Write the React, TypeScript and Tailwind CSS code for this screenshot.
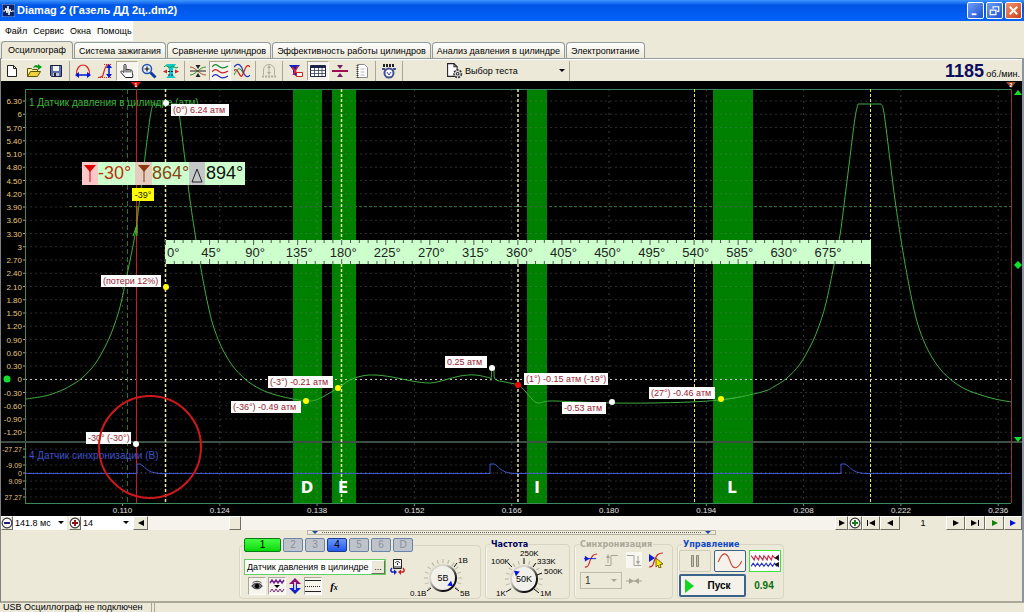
import type { ReactNode } from 'react';

const tabs = [
  'Осциллограф',
  'Система зажигания',
  'Сравнение цилиндров',
  'Эффективность работы цилиндров',
  'Анализ давления в цилиндре',
  'Электропитание',
];

const menu = ['Файл', 'Сервис', 'Окна', 'Помощь'];

type Point = [number, number];

/* ---------- small shared pieces ---------- */

const Icon = ({ children, className = 'size-4' }: { children: ReactNode; className?: string }) => (
  <svg viewBox="0 0 16 16" className={className} fill="none" aria-hidden="true">
    {children}
  </svg>
);

const Caret = ({ color = '#000' }: { color?: string }) => (
  <svg viewBox="0 0 6 4" className="pointer-events-none h-1 w-1.5 shrink-0" aria-hidden="true">
    <path d="M0 0h6L3 3z" fill={color} />
  </svg>
);

const Separator = () => <div className="mx-0.5 h-5 w-px shrink-0 bg-[#aca899]" />;

type ToolProps = { label: string; pressed?: boolean; disabled?: boolean; children: ReactNode };

const Tool = ({ label, pressed, disabled, children }: ToolProps) => (
  <button
    aria-label={label}
    disabled={disabled}
    className={
      pressed
        ? 'flex h-5 w-[22px] shrink-0 items-center justify-center border border-[#aca899] border-r-white border-b-white bg-[#f6f4ec]'
        : 'flex h-5 w-[22px] shrink-0 items-center justify-center'
    }
  >
    <Icon>{children}</Icon>
  </button>
);

/* ---------- title, menu, tabs ---------- */

const TitleBar = () => (
  <header className="flex h-[21px] shrink-0 items-center bg-linear-to-b from-[#3d95ff] from-0% via-[#0055e5] via-25% to-[#0162fb] px-0.5">
    <svg viewBox="0 0 13 13" className="mr-0.5 size-[13px]" aria-hidden="true">
      <rect width="13" height="13" fill="#0a246a" stroke="#8fb4f0" />
      <path d="M1 7h2l1-3 1 5 1-7 1 9 1-6 1 3 1-1h2" fill="none" stroke="#fff" />
    </svg>
    <h1 className="text-[11px] leading-none font-bold text-white">Diamag 2 (Газель ДД 2ц..dm2)</h1>
    <div className="ml-auto flex gap-0.5">
      <button aria-label="Свернуть" className="size-[17px] rounded-xs border border-white bg-linear-to-br from-[#6f9df5] to-[#1c4fd0]">
        <Icon className="size-[15px]">
          <path d="M4 12h5" stroke="#fff" strokeWidth="2" />
        </Icon>
      </button>
      <button aria-label="Восстановить" className="size-[17px] rounded-xs border border-white bg-linear-to-br from-[#6f9df5] to-[#1c4fd0]">
        <Icon className="size-[15px]">
          <path d="M6.500 6V4h6v5h-2" stroke="#fff" strokeWidth="1.300" />
          <path d="M3.500 7.500h6v5h-6z" stroke="#fff" strokeWidth="1.300" />
        </Icon>
      </button>
      <button aria-label="Закрыть" className="size-[17px] rounded-xs border border-white bg-linear-to-br from-[#f0906c] to-[#cf3c12]">
        <Icon className="size-[15px]">
          <path d="m4 4 8 8M12 4l-8 8" stroke="#fff" strokeWidth="2" />
        </Icon>
      </button>
    </div>
  </header>
);

const MenuBar = () => (
  <nav className="flex h-5 shrink-0">
    <ul className="flex w-[133px] items-center gap-1.5 bg-white pl-[5px]">
      {menu.map((item) => (
        <li key={item}>
          <button className="block">{item}</button>
        </li>
      ))}
    </ul>
  </nav>
);

const Tabs = () => (
  <div role="tablist" className="flex h-[18px] shrink-0 items-end gap-px border-b border-[#919b9c] pl-px">
    {tabs.map((tab, i) => (
      <button
        key={tab}
        role="tab"
        aria-selected={i === 0}
        className={
          i === 0
            ? '-mb-px h-[18px] rounded-t-sm border border-b-0 border-[#919b9c] bg-[#ece9d8] px-1.5 pb-px'
            : 'h-4 rounded-t-sm border border-b-0 border-[#919b9c] bg-linear-to-b from-white to-[#ece9d8] px-1'
        }
      >
        {tab}
      </button>
    ))}
  </div>
);

/* ---------- toolbar ---------- */

const Toolbar = () => (
  <div className="flex h-[22px] shrink-0 items-center border-t border-white">
    <Tool label="Новый">
      <path d="M3.500 2.500h6l3 3v8h-9z" fill="#fff" stroke="#222" />
      <path d="M9.500 2.500v3h3" stroke="#222" />
    </Tool>
    <Tool label="Открыть">
      <path d="M1.500 13.500v-8h4l1 1h5v2" fill="#fff3a0" stroke="#5c5200" />
      <path d="m1.500 13.500 3-5h10l-3 5z" fill="#f2cf3c" stroke="#5c5200" />
      <path d="M7 5c1-3 4-4 5-2V1l4 3-4 3V5c-2-1-3-1-5 0z" fill="#0a9a1a" />
    </Tool>
    <Tool label="Сохранить">
      <path d="M2.500 2.500h11v11h-10l-1-1z" fill="#5b6fa8" stroke="#1a1f4a" />
      <path d="M5 3h6v5H5z" fill="#f2f2f2" />
      <path d="M5 10h6v3H5z" fill="#c8c8c8" />
      <path d="M6 10h2v3H6z" fill="#1a1f4a" />
    </Tool>
    <Separator />
    <Tool label="Длительность">
      <path d="M1.500 11C1.500-1 14.500-1 14.500 11" stroke="#e02020" strokeWidth="1.200" />
      <path d="M3 12h10" stroke="#0018d8" strokeWidth="1.500" />
      <path d="m0 12 4-3v6zM16 12l-4-3v6z" fill="#0018d8" />
    </Tool>
    <Tool label="Амплитуда">
      <path d="M1 14.500c5 0 5-2 6-6s2-7 5-7" stroke="#e02020" strokeWidth="1.200" />
      <path d="M7 1.500h8M1 14.500h14" stroke="#e02020" strokeDasharray="1 1" />
      <path d="M12 4v8" stroke="#0018d8" strokeWidth="1.500" />
      <path d="m12 1 3 4H9zM12 15l3-4H9z" fill="#0018d8" />
    </Tool>
    <Tool label="Рука" pressed>
      <path
        d="M6.500 14.500 2 9.500c-.8-1 .6-2 1.500-1.200L5 9.500v-7c0-1.500 2-1.500 2 0V7c0-1 2-1 2 0 .2-.9 2-.7 2 .4.300-.8 2-.5 2 .5 0 2 1.500 3.500.500 6.600z"
        fill="#fff"
        stroke="#222"
      />
      <path d="M7 7v2.500M9 7v2.500M11 7.500v2" stroke="#222" />
    </Tool>
    <Tool label="Масштаб">
      <path d="m9.500 9.500 5 5" stroke="#123c9c" strokeWidth="3" />
      <circle cx="6" cy="6" r="4.500" fill="#eaf4ff" stroke="#2050b0" strokeWidth="1.500" />
      <path d="M6 3.500v5M3.500 6h5" stroke="#111" strokeWidth="1.200" />
    </Tool>
    <Tool label="Линейка">
      <path d="M3 1h10l-3 5v6l3 3H3l3-3V6z" fill="#10c8d0" />
      <path d="M1 4c3-4 5 3 7 0s4 3 7 0" stroke="#148a28" />
      <path d="M5 8.500h6M5 12h6" stroke="#222" strokeDasharray="2 1" />
      <path d="m0 8.500 4-2v4zM16 8.500l-4-2v4z" fill="#d02020" />
    </Tool>
    <Separator />
    <Tool label="Совместить">
      <path d="M0 4c6 0 9 8 16 8" stroke="#a05030" />
      <path d="M0 12C6 12 9 4 16 4" stroke="#2a8a2a" />
      <path d="M0 8h16" stroke="#222" />
      <path d="m8 6 2.500-4h-5zM8 10l2.500 4h-5z" fill="#222" />
    </Tool>
    <Tool label="Разнести" pressed>
      <path d="M0 4c3-4 5-2 8 0s5 1 8-1" stroke="#148a28" strokeWidth="1.200" />
      <path d="M0 9c3-4 5-2 8 0s5 1 8-1" stroke="#d02020" strokeWidth="1.200" />
      <path d="M0 14c3-4 5-2 8 0s5 1 8-1" stroke="#2030c0" strokeWidth="1.200" />
    </Tool>
    <Tool label="Наложить">
      <path d="M0 4c5-6 8 0 9 4s4 8 7 4" stroke="#2030c0" strokeWidth="1.200" />
      <path d="M0 8c3-6 6 8 8 5s4-14 8-9" stroke="#d02020" strokeWidth="1.200" />
      <path d="M0 12c4-8 6-8 9-2" stroke="#148a28" />
    </Tool>
    <Separator />
    <Tool label="Авто" disabled>
      <path d="M2.500 12V7a5.500 5.500 0 0 1 11 0v5M8 4v6" stroke="#b0ad9f" />
      <path d="m8 2 2 3H6zM8 12l2-3H6z" fill="#b0ad9f" />
      <path d="M1 13.500h14" stroke="#b0ad9f" strokeWidth="2" strokeDasharray="2 1" />
    </Tool>
    <Separator />
    <Tool label="Фильтр">
      <path d="M1 2h11L8 7v6l-3-2V7z" fill="#1020c0" />
      <path d="m4 4 6 8M10 3 5 12" stroke="#e02040" strokeWidth="1.500" />
      <path d="M8.500 9.500h6v4h-6z" fill="#fff" stroke="#d02020" />
    </Tool>
    <Tool label="Таблица" pressed>
      <path d="M.5 2.500h15v11H.5z" fill="#fff" stroke="#20264a" />
      <path d="M1 4h14" stroke="#20264a" strokeWidth="2" />
      <path d="M4.500 3v10M8.500 3v10M12 3v10M1 7.500h14M1 10.500h14" stroke="#20264a" strokeOpacity="0.7" />
    </Tool>
    <Tool label="Граница">
      <path d="M0 8h16" stroke="#a01050" strokeWidth="2" />
      <path d="m8 6 3-4H5zM8 10l3 4H5z" fill="#702060" />
    </Tool>
    <Tool label="Отчёт">
      <path d="M3.500 1.500h7l3 3v10h-10z" fill="#fff" stroke="#8a8a8a" />
      <path d="M3.500 2v13" stroke="#444" strokeWidth="2" strokeDasharray="1 1" />
      <path d="M6.500 6h4M6.500 9h4M6.500 12h4" stroke="#b8b8b8" />
    </Tool>
    <Separator />
    <Tool label="Автонастройка">
      <path d="M2 2.500h12" stroke="#222" strokeWidth="3" strokeDasharray="2 1" />
      <circle cx="8" cy="10" r="4.500" fill="#fff" stroke="#405090" strokeWidth="2" />
      <path d="m6 9 2 3 2-3" stroke="#3040b0" />
      <path d="M1 6h3M12 6h3" stroke="#405090" strokeWidth="2" />
    </Tool>
    <Separator />
    <label className="ml-[41px] flex w-[121px] items-center pr-0.5">
      <Icon className="mr-0.5 size-[17px] shrink-0">
        <path d="M1.500 1.500h6l3 3v9h-9z" fill="#fff" stroke="#222" />
        <path d="M7.500 1.500v3h3" stroke="#222" />
        <circle cx="11" cy="11" r="3.500" fill="#d8d8d8" stroke="#333" strokeDasharray="2 1" strokeWidth="1.500" />
        <circle cx="11" cy="11" r="1.200" fill="#fff" stroke="#333" />
      </Icon>
      <select aria-label="Выбор теста" className="min-w-0 flex-1 appearance-none outline-none">
        <option>Выбор теста</option>
      </select>
      <Caret />
    </label>
    <Separator />
    <div className="ml-auto flex items-baseline gap-0.5 pr-0.5">
      <output className="text-lg leading-none font-bold text-[#0a0a60]">1185</output>
      <span>об./мин.</span>
    </div>
  </div>
);

/* ---------- oscilloscope chart ---------- */

const PLOT = { left: 25, right: 1011, top: 89, bottom: 503 };
const PERIOD = 705;

// Catmull-Rom spline written out as cubic segments
const spline = (pts: Point[]) =>
  pts.reduce((d, p, i) => {
    if (i === 0) return `M${p[0]} ${p[1]}`;
    const a = pts[i - 2] ?? pts[i - 1];
    const b = pts[i - 1];
    const c = pts[i + 1] ?? p;
    return `${d}C${b[0] + (p[0] - a[0]) / 6} ${b[1] + (p[1] - a[1]) / 6} ${p[0] - (c[0] - b[0]) / 6} ${p[1] - (c[1] - b[1]) / 6} ${p[0]} ${p[1]}`;
  }, '');

const rise: Point[] = [
  [26, 399], [45, 396], [60, 391], [70, 386], [82, 378], [95, 364], [107, 343], [115, 323],
  [121, 303], [128, 270], [135, 235], [139, 205], [144, 165], [150, 118], [153, 104],
];
const fall: Point[] = [
  [176, 104], [179, 113], [185, 160], [190, 200], [197, 246], [203, 280], [208, 305], [213, 325],
  [221, 346], [232, 365], [245, 379], [260, 389], [276, 395], [293, 399],
];
const middle: Point[] = [
  [293, 399], [306, 401], [316, 400], [326, 395], [338, 388], [350, 380], [362, 376], [375, 375],
  [392, 377], [412, 381], [430, 383], [445, 380], [460, 376], [475, 375], [490, 378], [491, 380],
  [492, 368], [494, 368], [495, 379], [505, 382], [518, 385], [525, 391], [532, 399], [538, 403],
  [550, 401], [580, 402], [612, 403], [650, 403], [690, 402], [720, 400], [740, 397],
];
const shift = (pts: Point[]): Point[] => pts.map(([x, y]) => [x + PERIOD, y]);
const rise2: Point[] = [...middle.slice(-2), ...shift(rise).slice(2)];
const fall2: Point[] = [...shift(fall).slice(0, -1), [995, 399], [1011, 402]];

const bands = [
  { x: 293, w: 29, name: 'D', nx: 307 },
  { x: 332, w: 24, name: 'E', nx: 343 },
  { x: 527, w: 20, name: 'I', nx: 537 },
  { x: 713, w: 40, name: 'L', nx: 732 },
];

const notes = [
  { x: 171, y: 104, w: 58, text: '(0°) 6.24 атм' },
  { x: 101, y: 275, w: 60, text: '(потери 12%)' },
  { x: 268, y: 376, w: 65, text: '(-3°) -0.21 атм' },
  { x: 231, y: 401, w: 70, text: '(-36°) -0.49 атм' },
  { x: 445, y: 356, w: 42, text: '0.25 атм' },
  { x: 524, y: 373, w: 84, text: '(1°) -0.15 атм (-19°)' },
  { x: 562, y: 402, w: 44, text: '-0.53 атм' },
  { x: 649, y: 387, w: 66, text: '(27°) -0.46 атм' },
  { x: 86, y: 432, w: 45, text: '-30° (-30°)' },
];

const dots = [
  { x: 166, y: 103, fill: '#fff' },
  { x: 166, y: 287, fill: '#ffff00' },
  { x: 306, y: 401, fill: '#ffff00' },
  { x: 338, y: 388, fill: '#ffff00' },
  { x: 492, y: 368, fill: '#fff' },
  { x: 518, y: 385, fill: '#ff0000' },
  { x: 612, y: 402, fill: '#fff' },
  { x: 721, y: 399, fill: '#ffff00' },
  { x: 136, y: 444, fill: '#fff' },
];

const syncLevels = [
  { y: 449, text: '-27.27' },
  { y: 457, text: '' },
  { y: 465, text: '-9.09' },
  { y: 473, text: '0' },
  { y: 481, text: '9.09' },
  { y: 489, text: '' },
  { y: 497, text: '27.27' },
];

const pressureLevels = Array.from({ length: 26 }, (_, i) => {
  const value = (63 - i * 3) / 10;
  return { y: 101 + i * 13.25, text: Number.isInteger(value) ? String(value) : value.toFixed(2) };
});

const times = Array.from({ length: 10 }, (_, i) => ({
  x: 122.5 + i * 97.3,
  text: (0.11 + i * 0.014).toFixed(3),
}));

const phases = [165.5, 341.5, 518, 694.5, 870.5];

const Ruler = () => (
  <g fontSize="13" fill="#222">
    <rect x="165" y="240" width="706" height="24" fill="#ccffcc" />
    {Array.from({ length: 80 }, (_, i) => {
      const x = 165.5 + i * 8.81;
      const len = i % 5 === 0 ? 5 : 3;
      return <path key={i} d={`M${x} 240v${len}M${x} 264v-${len}`} stroke="#555" />;
    })}
    {Array.from({ length: 16 }, (_, i) => (
      <text key={i} x={i === 0 ? 167 : 167 + i * 44.06} y="257" textAnchor={i === 0 ? 'start' : 'middle'}>
        {i * 45}°
      </text>
    ))}
  </g>
);

const Readout = () => (
  <g fontSize="18">
    <rect x="82" y="162" width="163" height="23" fill="#ccffcc" />
    <rect x="82" y="162" width="16" height="23" fill="#ffc8c8" />
    <rect x="135" y="162" width="17" height="23" fill="#e4cdc0" />
    <text x="98" y="179" fill="#c03010">-30°</text>
    <text x="152" y="179" fill="#8b4513">864°</text>
    <rect x="189" y="162" width="16" height="23" fill="#c4c8c8" />
    <path d="M84 165h12l-6 7z" fill="#e00000" />
    <path d="M90 170v12" stroke="#e00000" />
    <path d="M138 165h12l-6 7z" fill="#8b3a10" />
    <path d="M144 170v12" stroke="#8b3a10" />
    <path d="m197 169-5 13h10z" fill="none" stroke="#222" />
    <text x="206" y="179" fill="#111">894°</text>
    <rect x="132" y="188" width="22" height="13" fill="#ffff00" />
    <text x="143" y="198" fontSize="9" textAnchor="middle" fill="#222">
      -39°
    </text>
  </g>
);

const Chart = () => (
  <svg
    viewBox="1 81 1021 435"
    role="img"
    aria-label="Осциллограмма давления в цилиндре"
    className="block h-auto w-full shrink-0 bg-black font-['Liberation_Sans',sans-serif]"
  >
    {/* phase bands */}
    {bands.map((b) => (
      <rect key={b.name} x={b.x} y={PLOT.top} width={b.w} height={PLOT.bottom - PLOT.top} fill="#008000" />
    ))}

    {/* grid */}
    {[...pressureLevels, ...syncLevels].map((l) => (
      <g key={l.y}>
        <path d={`M${PLOT.left} ${l.y}H${PLOT.right}`} stroke="#808080" strokeOpacity="0.35" strokeDasharray="2 3" />
        <path d={`M23 ${l.y}h2`} stroke="#a0a0a0" />
      </g>
    ))}
    <g textAnchor="end" fill="#e8c878">
      {pressureLevels.map((l) => (
        <text key={l.y} x="22" y={l.y + 3} fontSize="8">
          {l.text}
        </text>
      ))}
      {syncLevels.map((l) => (
        <text key={l.y} x="22" y={l.y + 3} fontSize="7">
          {l.text}
        </text>
      ))}
    </g>
    {times.map((t) => (
      <g key={t.text}>
        <path d={`M${t.x} ${PLOT.top}V${PLOT.bottom}`} stroke="#808080" strokeOpacity="0.45" strokeDasharray="2 4" />
        <path d={`M${t.x} ${PLOT.bottom}v3`} stroke="#60a080" />
        <text x={t.x} y="513" fontSize="8" textAnchor="middle" fill="#e0e0e0">
          {t.text}
        </text>
      </g>
    ))}
    <path d="M25 379.500H1011" stroke="#c8c8c8" strokeDasharray="2 3" />
    <path d="M69 206.500H1011" stroke="#2e6a34" strokeDasharray="3 2" />
    <path d="M127.500 89V503" stroke="#1f7a28" strokeDasharray="5 3" />

    {/* frame */}
    <path d="M25.500 503V89.500H1011" fill="none" stroke="#3c8a5c" />
    <path d="M25 503.500H1011" stroke="#3c8a5c" />
    <path d="M1 442H1022" stroke="#3e5046" strokeWidth="2" />

    {/* sensor titles */}
    <text x="29" y="106" fontSize="10" fill="#38b838">
      1 Датчик давления в цилиндре (атм)
    </text>
    <text x="29" y="459" fontSize="10" fill="#3c50c8">
      4 Датчик синхронизации (В)
    </text>

    {/* cursor 1 and phase marks */}
    {phases.map((x, i) => (
      <path
        key={x}
        d={`M${x} 89V503`}
        stroke={i < 3 ? '#e8e8a8' : '#e8e860'}
        strokeWidth={i < 3 ? 1.5 : 1}
        strokeDasharray="3 2"
      />
    ))}
    <path d="M136.500 89V503" stroke="#c02020" />
    <path d="M1011.500 89V503" stroke="#8a3a20" />
    <path d="M131 82h10l-5 6z" fill="#e01010" />
    <path d="M1006 82h10l-5 6z" fill="#a04a20" />
    <text x="136" y="87" fontSize="5" fontWeight="bold" textAnchor="middle" fill="#fff">
      1
    </text>
    <text x="1011" y="87" fontSize="5" fontWeight="bold" textAnchor="middle" fill="#fff">
      2
    </text>

    {/* pressure trace */}
    <g fill="none" stroke="#3fae3f">
      <path d={spline(rise)} />
      <path d="M153 104H176" strokeDasharray="6 3" />
      <path d={spline(fall)} />
      <path d={spline(middle)} />
      <path d={spline(rise2)} />
      <path d="M858 104H881" />
      <path d={spline(fall2)} />
    </g>
    <path d="m133 236 4-11v11" fill="none" stroke="#20e020" />
    <path d="M137 233v-27" stroke="#b08020" />

    {/* sync trace */}
    <path
      d="M25 473.500H137V464h3c4 1 6 9 20 9.500H490V464h4c4 1 6 9 20 9.500H841V464h4c4 1 6 9 20 9.500H1011"
      fill="none"
      stroke="#3c54d0"
    />
    <path d="M25 473H1011" stroke="#b8c0e0" strokeOpacity="0.3" strokeDasharray="1 3" />

    <g fontFamily="DejaVu Sans, sans-serif" fontSize="15" fontWeight="bold" textAnchor="middle" fill="#fff">
      {bands.map((b) => (
        <text key={b.name} x={b.nx} y="493">
          {b.name}
        </text>
      ))}
    </g>

    <Readout />
    <Ruler />

    {notes.map((n) => (
      <g key={n.text}>
        <rect x={n.x} y={n.y} width={n.w} height="12" fill="#fff" />
        <text x={n.x + 2} y={n.y + 9} fontSize="9" fill="#a01830">
          {n.text}
        </text>
      </g>
    ))}
    <circle cx="150" cy="447" r="51" fill="none" stroke="#d01818" strokeWidth="2" />
    {dots.map((d) => (
      <circle key={`${d.x}-${d.y}`} cx={d.x} cy={d.y} r="3" fill={d.fill} />
    ))}

    {/* level handles */}
    <circle cx="7" cy="379" r="3.500" fill="#10e030" />
    <path d="m1018 90 4 5h-8zM1018 261l4 4-4 4-4-4zM1018 442l4-5h-8z" fill="#10e030" />
  </svg>
);

/* ---------- navigation strip ---------- */

const navButton =
  'flex h-[14px] shrink-0 items-center justify-center border border-white border-r-[#716f64] border-b-[#716f64] bg-[#ece9d8]';

const RoundSign = ({ color, plus }: { color: string; plus?: boolean }) => (
  <Icon className="size-3 shrink-0">
    <circle cx="8" cy="8" r="6.500" fill="#fff" stroke="#333" strokeWidth="1.500" />
    <path d={plus ? 'M4 8h8M8 4v8' : 'M4 8h8'} stroke={color} strokeWidth="2.500" />
  </Icon>
);

const Arrow = ({ d, color = '#000' }: { d: string; color?: string }) => (
  <svg viewBox="0 0 10 8" className="h-2 w-2.5" aria-hidden="true">
    <path d={d} fill={color} />
  </svg>
);

const LEFT = 'M8 1v6L2 4z';
const RIGHT = 'M2 1v6l6-3z';

const NavStrip = () => (
  <div className="flex h-[14px] shrink-0 items-center">
    <button aria-label="Сжать" className={`${navButton} w-3`}>
      <RoundSign color="#101080" />
    </button>
    <label className="flex h-full w-[54px] items-center bg-white pr-[3px]">
      <select aria-label="Развёртка" className="min-w-0 flex-1 appearance-none pl-0.5 outline-none">
        <option>141.8 мс</option>
      </select>
      <Caret />
    </label>
    <button aria-label="Растянуть" className={`${navButton} ml-0.5 w-3`}>
      <RoundSign color="#901010" plus />
    </button>
    <label className="flex h-full w-[52px] items-center bg-white pr-1">
      <select aria-label="Масштаб" className="min-w-0 flex-1 appearance-none pl-0.5 outline-none">
        <option>14</option>
      </select>
      <Caret />
    </label>
    <button aria-label="Влево" className={`${navButton} w-[15px]`}>
      <Arrow d={LEFT} />
    </button>
    <input
      type="range"
      aria-label="Прокрутка"
      defaultValue={12}
      className="h-[14px] min-w-0 flex-1 appearance-none bg-[#f5f3ec] [&::-webkit-slider-thumb]:h-[14px] [&::-webkit-slider-thumb]:w-3 [&::-webkit-slider-thumb]:appearance-none [&::-webkit-slider-thumb]:border [&::-webkit-slider-thumb]:border-white [&::-webkit-slider-thumb]:border-r-[#716f64] [&::-webkit-slider-thumb]:border-b-[#716f64] [&::-webkit-slider-thumb]:bg-[#ece9d8]"
    />
    <button aria-label="Вправо" className={`${navButton} w-[13px]`}>
      <Arrow d={RIGHT} />
    </button>
    <button aria-label="Добавить" className={`${navButton} w-[14px]`}>
      <RoundSign color="#108010" plus />
    </button>
    <button aria-label="В начало" className={`${navButton} w-[18px]`}>
      <Arrow d="M1 1h1v6H1zM9 1v6L3 4z" />
    </button>
    <button aria-label="Предыдущий кадр" className={`${navButton} w-5`}>
      <Arrow d={LEFT} />
    </button>
    <output className="w-[46px] text-center">1</output>
    <button aria-label="Следующий кадр" className={`${navButton} w-[19px]`}>
      <Arrow d={RIGHT} />
    </button>
    <button aria-label="В конец" className={`${navButton} w-5`}>
      <Arrow d="M1 1v6l6-3zM8 1h1v6H8z" />
    </button>
    <button aria-label="Воспроизвести" className={`${navButton} w-[19px]`}>
      <Arrow d="M2 1v6l6-3z" color="#108010" />
    </button>
    <button aria-label="Воспроизвести всё" className={`${navButton} w-[18px]`}>
      <Arrow d="M2 1v6l6-3z" color="#0010e0" />
    </button>
  </div>
);

/* ---------- control panel ---------- */

const group = 'h-[61px] min-w-0 rounded-sm border border-[#d8d4c0] shadow-[inset_1px_0_#f8f6ee]';
const caption = "ml-1 px-px font-['DejaVu_Sans_Condensed','DejaVu_Sans',sans-serif] leading-3 font-bold";

type Mark = { x1: number; y1: number; x2: number; y2: number; tx: number; ty: number; text: string };

type KnobProps = { value: string; angle: number; marks: Mark[]; cx: number; className: string; viewBox: string };

const Knob = ({ value, angle, marks, cx, className, viewBox }: KnobProps) => (
  <svg viewBox={viewBox} className={className} role="img" aria-label={value} fill="#000">
    <defs>
      <linearGradient id={`knob-${value}`} x1="0" y1="0" x2="1" y2="1">
        <stop offset="0.3" stopColor="#d8d6cc" />
        <stop offset="0.75" stopColor="#111" />
      </linearGradient>
    </defs>
    {Array.from({ length: 15 }, (_, i) => (
      <path key={i} d={`M${cx} 11v4`} stroke="#b8b4a4" transform={`rotate(${-126 + i * 18} ${cx} 30)`} />
    ))}
    <circle cx={cx} cy="30" r="13" fill="#f2f0ea" stroke={`url(#knob-${value})`} strokeWidth="2" />
    <path d={`M${cx} 17l3 5h-6z`} fill="#0018d8" transform={`rotate(${angle} ${cx} 30)`} />
    <text x={cx} y="33" fontSize="9" textAnchor="middle">
      {value}
    </text>
    {marks.map((m) => (
      <g key={m.text}>
        <path d={`M${m.x1} ${m.y1}L${m.x2} ${m.y2}`} stroke="#111" />
        <text x={m.tx} y={m.ty} fontSize="8">
          {m.text}
        </text>
      </g>
    ))}
  </svg>
);

const rangeMarks: Mark[] = [
  { x1: 46, y1: 19, x2: 49, y2: 15, tx: 50, ty: 15, text: '1В' },
  { x1: 23, y1: 40, x2: 19, y2: 43, tx: 2, ty: 48, text: '0.1В' },
  { x1: 47, y1: 40, x2: 51, y2: 43, tx: 52, ty: 48, text: '5В' },
];

const rateMarks: Mark[] = [
  { x1: 38, y1: 9, x2: 38, y2: 15, tx: 34, ty: 7, text: '250K' },
  { x1: 22, y1: 14, x2: 26, y2: 18, tx: 5, ty: 15, text: '100K' },
  { x1: 47, y1: 18, x2: 50, y2: 14, tx: 51, ty: 15, text: '333K' },
  { x1: 51, y1: 26, x2: 56, y2: 24, tx: 58, ty: 25, text: '500K' },
  { x1: 25, y1: 40, x2: 20, y2: 43, tx: 10, ty: 47, text: '1K' },
  { x1: 48, y1: 40, x2: 53, y2: 44, tx: 54, ty: 47, text: '1M' },
];

const channels = [
  { name: '1', style: 'w-[37px] border-[#0a7a14] bg-linear-to-b from-[#40ff40] to-[#00d800] text-black' },
  { name: '2', style: 'w-5 border-[#6a84a8] bg-[#bfc4cc] text-[#8a8f98]' },
  { name: '3', style: 'w-5 border-[#6a84a8] bg-[#bfc4cc] text-[#8a8f98]' },
  { name: '4', style: 'w-5 border-[#1c3890] bg-linear-to-b from-[#6a96ff] to-[#2458e8] text-black' },
  { name: '5', style: 'w-5 border-[#6a84a8] bg-[#bfc4cc] text-[#8a8f98]' },
  { name: '6', style: 'w-5 border-[#6a84a8] bg-[#bfc4cc] text-[#8a8f98]' },
  { name: 'D', style: 'w-5 border-[#6a84a8] bg-[#bfc4cc] text-[#8a8f98]' },
];

const pressedCell =
  'flex size-[18px] items-center justify-center border border-[#aca899] border-r-white border-b-white bg-[#f6f4ec]';

const ChannelGroup = () => (
  <fieldset className={`${group} w-[242px] pl-1`}>
    <legend className="flex gap-0.5">
      {channels.map((c) => (
        <button key={c.name} className={`h-[14px] rounded-xs border text-[10px] leading-none ${c.style}`}>
          {c.name}
        </button>
      ))}
    </legend>
    <div className="flex">
      <div className="w-40 pt-[7px]">
        <div className="flex items-center gap-1">
          <div className="flex h-4 w-[142px] items-center border border-[#60d060] bg-white">
            <input
              aria-label="Датчик"
              defaultValue="Датчик давления в цилиндре"
              className="h-full min-w-0 flex-1 pl-0.5 outline-none"
            />
            <button aria-label="Выбрать датчик" className={`${navButton} w-[14px]`}>
              ...
            </button>
          </div>
          <button aria-label="Сменить датчик" className="-mr-4">
            <Icon>
              <path d="M3.500.5h8v9h-8z" fill="#fff" stroke="#222" />
              <path d="M5 4c2-2 3-2 5 0M7.500 6V4M4 8h7" stroke="#222" />
              <path d="M5 13H2c-2-1-1-3 0-4" stroke="#1020c0" strokeWidth="1.500" />
              <path d="M10 13h3c2-1 1-3 0-4" stroke="#d02020" strokeWidth="1.500" />
              <path d="m4 10.500 3 2.500-3 3z" fill="#1020c0" />
              <path d="m11 10.500-3 2.500 3 3z" fill="#d02020" />
            </Icon>
          </button>
        </div>
        <div className="mt-0.5 flex items-center gap-0.5 pl-1">
          <button aria-label="Показать" className={pressedCell}>
            <Icon className="size-3">
              <path d="M1 8c3-5 11-5 14 0-3 5-11 5-14 0z" fill="#777" stroke="#111" />
              <circle cx="8" cy="8" r="3" fill="#000" />
              <path d="M2 4c3-3 9-3 12 0" stroke="#111" />
            </Icon>
          </button>
          <button aria-label="Инверсия" className={pressedCell}>
            <Icon>
              <path d="M1 5l2-3 2 3 2-3 2 3 2-3 2 3 2-3" stroke="#702090" strokeWidth="1.500" />
              <path d="m8 10 3-3H5z" fill="#000" />
              <path d="M1 14l2-3 2 3 2-3 2 3 2-3 2 3 2-3" stroke="#802080" />
            </Icon>
          </button>
          <button aria-label="Сдвиг" className="flex size-[14px] items-center justify-center">
            <Icon className="size-4 shrink-0">
              <path d="m8 0 6 6h-4v2H6V6H2z" fill="#8a1070" />
              <path d="m8 16 6-6h-4V7H6v3H2z" fill="#1020d0" />
              <path d="M8 4v8" stroke="#fff" strokeWidth="1.500" />
            </Icon>
          </button>
          <button aria-label="Уровни" className={pressedCell}>
            <Icon>
              <path d="M0 2.500h16M0 13.500h16" stroke="#222" />
              <path d="M0 8.500h16" stroke="#222" strokeDasharray="1 1" />
            </Icon>
          </button>
          <button aria-label="Формула" className="w-5 font-['Liberation_Serif',serif] text-[11px] leading-none font-bold italic">
            f<span className="text-[8px]">x</span>
          </button>
        </div>
      </div>
      <Knob
        value="5В"
        angle={130}
        marks={rangeMarks}
        cx={35}
        viewBox="0 0 70 50"
        className="-mt-1 ml-1 h-[50px] w-[70px] shrink-0 overflow-visible"
      />
    </div>
  </fieldset>
);

const ControlPanel = () => (
  <section className="flex shrink-0 justify-center gap-1">
    <ChannelGroup />
    <fieldset className={`${group} w-[85px]`}>
      <legend className={`${caption} text-[#000060]`}>Частота</legend>
      <Knob
        value="50K"
        angle={-50}
        marks={rateMarks}
        cx={38}
        viewBox="0 0 84 50"
        className="-mt-px h-[50px] w-[84px] overflow-visible"
      />
    </fieldset>
    <fieldset className={`${group} w-[99px]`}>
      <legend className={`${caption} text-[#aca899]`}>Синхронизация</legend>
      <div className="mt-0.5 flex justify-between px-2">
        <button aria-label="Уровень синхронизации">
          <Icon className="size-[15px]">
            <path d="M2 15c5 0 4-4 6-8s3-6 7-6" stroke="#d02020" strokeWidth="1.200" />
            <path d="M1 6h13" stroke="#1020d0" />
            <path d="m2 3 5 3-5 3z" fill="#1020d0" />
          </Icon>
        </button>
        <button aria-label="По фронту" disabled>
          <Icon>
            <path d="M1 13.500h6V3.500h7M4 11V5" stroke="#a8a598" />
            <path d="m4 2 2 4H2z" fill="#a8a598" />
          </Icon>
        </button>
        <button aria-label="По спаду" disabled className="bg-[#f8f6f0]">
          <Icon>
            <path d="M1 3.500h7v10h7M12 4v6" stroke="#a8a598" />
            <path d="m12 13 2-4h-4z" fill="#a8a598" />
          </Icon>
        </button>
        <button aria-label="Выбрать уровень">
          <Icon>
            <path d="M1 15c5 0 4-4 6-8s3-6 8-6" stroke="#d02020" strokeWidth="1.200" />
            <path d="m1 2 6 4-6 4z" fill="#1020d0" />
            <path d="m8 6 7 6-3 .5 1 3-2 .5-1-3-2 2z" fill="#ffe800" stroke="#554800" strokeWidth="0.800" />
          </Icon>
        </button>
      </div>
      <div className="mt-1 flex items-center gap-1 pl-[5px]">
        <label className="flex h-[17px] w-[42px] items-center border border-[#c0bca8] pr-1">
          <select aria-label="Канал синхронизации" className="min-w-0 flex-1 appearance-none pl-1 text-[10px] text-[#333] outline-none">
            <option>1</option>
          </select>
          <Caret color="#a8a598" />
        </label>
        <Icon>
          <path d="M0 8h16" stroke="#a8a598" />
          <path d="m3 5 5 3-5 3zM13 5 8 8l5 3z" fill="#a8a598" />
        </Icon>
      </div>
    </fieldset>
    <fieldset className={`${group} w-[107px]`}>
      <legend className={`${caption} text-[#1048c8]`}>Управление</legend>
      <div className="flex gap-[3px] px-px">
        <button aria-label="Пауза" className="flex h-[22px] w-8 items-center justify-center rounded-xs border border-[#d0ccb8]">
          <Icon>
            <path d="M4.500 2.500h2v11h-2zM9.500 2.500h2v11h-2z" fill="#c8c4b4" stroke="#8a8778" />
          </Icon>
        </button>
        <button aria-label="Осциллограмма" className="h-[22px] w-8 rounded-xs border border-[#3c6488] bg-[#f4f2ea]">
          <svg viewBox="0 0 28 18" className="h-5 w-[30px]" fill="none" aria-hidden="true">
            <path d="M3 10C7 0 11 0 14 9s7 8 11 0" stroke="#d04030" />
          </svg>
        </button>
        <button aria-label="Непрерывно" className="h-[22px] w-8 border border-[#40e040] bg-white">
          <svg viewBox="0 0 28 18" className="h-5 w-[30px]" fill="none" aria-hidden="true">
            <path d="m1 4 3 4 1-4 3 4 1-4 3 4 1-4 3 4 1-4 3 4 1-4 3 3" stroke="#d02040" />
            <path d="m1 14 2-3 2 3 2-3 2 3 2-3 2 3 2-3 2 3 2-3 2 3 2-3 2 3" stroke="#2030c0" />
            <path d="m27 3-4 3 4 3zM27 10l-4 2 4 3z" fill="#111" />
          </svg>
        </button>
      </div>
      <div className="mt-0.5 flex items-center px-px">
        <button className="flex h-[23px] w-[67px] items-center rounded-xs border-2 border-[#3c6488] bg-[#f4f2ea] pl-1 text-[10px] font-bold">
          <svg viewBox="0 0 9 14" className="h-3.5 w-[9px]" aria-hidden="true">
            <path d="M0 0v14l9-7z" fill="#10d820" />
          </svg>
          <span className="flex-1 text-center">Пуск</span>
        </button>
        <output className="flex-1 text-center text-[10px] font-bold text-[#087010]">0.94</output>
      </div>
    </fieldset>
  </section>
);

const App = () => (
  <div className="flex h-screen flex-col overflow-hidden bg-[#ece9d8] font-['Liberation_Sans',sans-serif] text-[9px] leading-3 text-black">
    <TitleBar />
    <MenuBar />
    <Tabs />
    <main className="shrink-0 border-r-2 border-l border-r-[#8c94a4] border-l-[#808080]">
      <Toolbar />
      <Chart />
      <NavStrip />
      <div className="mx-auto flex h-[5px] w-2/5 items-center justify-between border border-[#b8b4a4] px-1">
        <Caret color="#2048a0" />
        <div className="mx-1 flex-1 border-t border-dotted border-[#666]" />
        <Caret color="#2048a0" />
      </div>
      <div className="border-b border-[#aca899] pt-[3px] pb-0.5">
        <ControlPanel />
      </div>
    </main>
    <footer className="flex min-h-2.5 flex-1 gap-0.5 border-t border-[#aca899]">
      <p className="w-[152px] border-r border-[#aca899] pl-[3px] leading-2 whitespace-nowrap">USB Осциллограф не подключен</p>
      <div className="flex-1 border-l border-[#aca899]" />
    </footer>
  </div>
);

export default App;
